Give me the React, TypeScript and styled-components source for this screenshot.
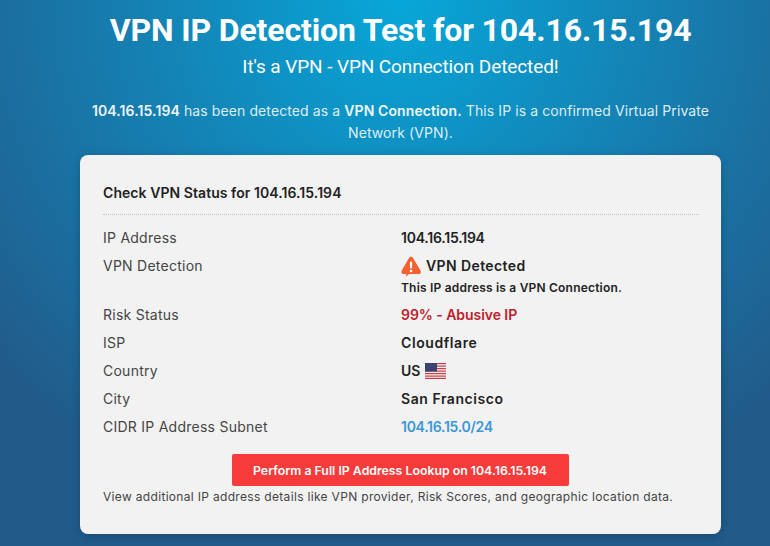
import React from "react";
import styled, { createGlobalStyle } from "styled-components";

const Global = createGlobalStyle`
  html, body { margin: 0; padding: 0; height: 100%; overflow: hidden; }
  #root { height: 546px; width: 770px; overflow: hidden; }
`;

const Page = styled.div`
  width: 801px;
  height: 546px;
  overflow: hidden;
  box-sizing: border-box;
  display: flex;
  flex-direction: column;
  align-items: center;
  background: radial-gradient(ellipse 540px 540px at 400px 0px, #07a7d9 0%, #1483b5 45%, #215b8a 100%);
  font-family: "Inter", "Liberation Sans", sans-serif;
`;

const Title = styled.h1`
  margin: 11px 0 0;
  font: 700 32px/38px "Roboto", sans-serif;
  color: #fff;
  letter-spacing: -0.13px;
  text-align: center;
`;

const Subtitle = styled.h2`
  margin: 6px 0 0;
  font: 400 19px/24px "Roboto", sans-serif;
  letter-spacing: -0.1px;
  color: #fff;
  text-align: center;
`;

const Lead = styled.p`
  margin: 21px 0 0;
  width: 640px;
  font-size: 14px;
  line-height: 22px;
  letter-spacing: 0.1px;
  color: #dfeef5;
  text-align: center;
  strong { font-weight: 600; color: #eef6fa; }
`;

const Card = styled.section`
  box-sizing: border-box;
  width: 641px;
  margin-top: 11px;
  padding: 29px 22px 0 23px;
  height: 379px;
  background: #f2f2f2;
  border-radius: 8px;
  box-shadow: 0 2px 10px rgba(0, 0, 0, 0.2);
  flex: none;
`;

const CardTitle = styled.h3`
  margin: 0;
  padding-bottom: 12px;
  font-size: 14px;
  line-height: 18px;
  font-weight: 600;
  letter-spacing: 0.06px;
  color: #222;
  border-bottom: 1px dotted #c4c4c4;
`;

const Rows = styled.div`
  display: flex;
  flex-direction: column;
  margin-top: 9px;
`;

const Row = styled.div`
  display: grid;
  grid-template-columns: 298px 1fr;
  align-items: start;
  min-height: 27.8px;
  font-size: 14px;
  line-height: 28px;
`;

const Label = styled.div`
  color: #454545;
  letter-spacing: 0.25px;
`;

const Value = styled.div<{ $tone?: string; $track?: number }>`
  font-weight: 600;
  color: ${(p) => p.$tone || "#222"};
  letter-spacing: ${(p) => p.$track ?? 0}px;
  display: flex;
  align-items: center;
  gap: 5px;
`;

const Stack = styled.div`
  display: flex;
  flex-direction: column;
  height: 49px;
`;

const Note = styled.div`
  font-size: 12px;
  line-height: 15px;
  font-weight: 600;
  letter-spacing: 0.2px;
  color: #222;
`;

const Action = styled.div`
  display: flex;
  flex-direction: column;
  align-items: center;
  margin-top: 13px;
  padding-right: 2px;
`;

const LookupButton = styled.a`
  width: 337px;
  height: 32px;
  display: flex;
  align-items: center;
  justify-content: center;
  background: #f73b3b;
  border-radius: 2px;
  color: #fff;
  font-size: 12.3px;
  font-weight: 600;
`;

const Hint = styled.p`
  margin: 2px 0 0;
  align-self: flex-start;
  font-size: 12px;
  line-height: 18px;
  letter-spacing: 0.32px;
  color: #444;
  white-space: nowrap;
`;

const Warn = () => (
  <svg width="20" height="21" viewBox="0 0 20 21" aria-hidden="true">
    <path d="M10 0.800c-.9 0-1.500.5-2 1.300L.8 14.600c-.9 1.600 0 3.400 1.800 3.400h2.700l-.5 2.400 3.500-2.400h9.400c1.800 0 2.700-1.800 1.800-3.400L12 2.100c-.5-.8-1.100-1.300-2-1.300z" fill="#f4612f" />
    <rect x="8.900" y="5.500" width="2.200" height="7" rx="1" fill="#fff" />
    <circle cx="10" cy="15" r="1.300" fill="#fff" />
  </svg>
);

const Flag = () => (
  <svg width="21" height="16" viewBox="0 0 21 16" aria-hidden="true">
    <rect width="21" height="16" fill="#f4eeee" />
    {[0, 2.5, 5, 7.5, 10, 12.5, 14.8].map((y) => (
      <rect key={y} y={y} width="21" height="1.200" fill="#c8404a" />
    ))}
    <rect width="12" height="8.500" fill="#36446f" />
  </svg>
);

export default function App() {
  return (
    <Page>
      <Global />
      <Title>VPN IP Detection Test for 104.16.15.194</Title>
      <Subtitle>It's a VPN - VPN Connection Detected!</Subtitle>
      <Lead>
        <strong>104.16.15.194</strong> has been detected as a <strong>VPN Connection.</strong> This IP is a confirmed Virtual Private Network (VPN).
      </Lead>
      <Card>
        <CardTitle>Check VPN Status for 104.16.15.194</CardTitle>
        <Rows>
          <Row><Label>IP Address</Label><Value $track={-0.23}>104.16.15.194</Value></Row>
          <Row>
            <Label>VPN Detection</Label>
            <Stack>
              <Value $track={0.4}><Warn />VPN Detected</Value>
              <Note>This IP address is a VPN Connection.</Note>
            </Stack>
          </Row>
          <Row><Label>Risk Status</Label><Value $tone="#c0202a" $track={-0.06}>99% - Abusive IP</Value></Row>
          <Row><Label>ISP</Label><Value $track={0.6}>Cloudflare</Value></Row>
          <Row><Label>Country</Label><Value $track={0}>US <Flag /></Value></Row>
          <Row><Label>City</Label><Value $track={0.55}>San Francisco</Value></Row>
          <Row><Label>CIDR IP Address Subnet</Label><Value $tone="#3a97d8" $track={-0.28}>104.16.15.0/24</Value></Row>
        </Rows>
        <Action>
          <LookupButton>Perform a Full IP Address Lookup on 104.16.15.194</LookupButton>
          <Hint>View additional IP address details like VPN provider, Risk Scores, and geographic location data.</Hint>
        </Action>
      </Card>
    </Page>
  );
}
